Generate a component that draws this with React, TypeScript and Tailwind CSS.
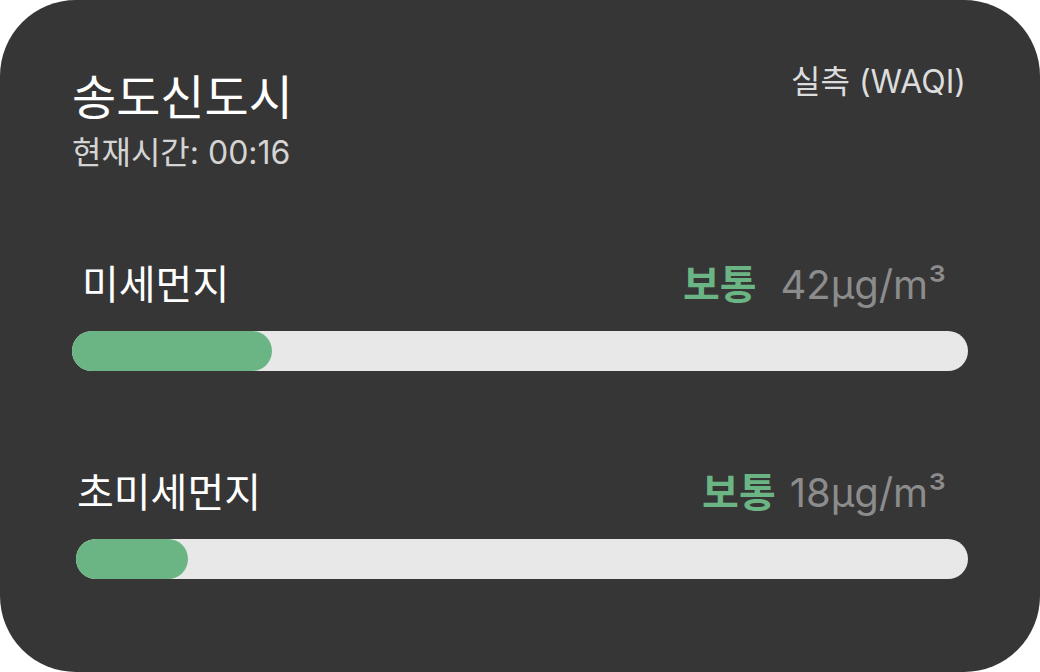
const font = { fontFamily: "Inter, 'Noto Sans CJK KR', sans-serif" };

function Row({
  label,
  level,
  value,
  pct,
  labelPad,
  barPad,
  gap,
}: {
  label: string;
  level: string;
  value: string;
  pct: number;
  labelPad: string;
  barPad: string;
  gap: string;
}) {
  return (
    <div>
      <div className={`flex items-center justify-between pr-[94px] ${labelPad}`}>
        <span className="text-[40px] leading-[48px] text-white">{label}</span>
        <div className={`flex items-center ${gap}`}>
          <span className="text-[40px] leading-[48px] font-bold text-[#6bb584]">{level}</span>
          <span className="text-[40px] leading-[48px] text-[#8c8c8c]">{value}</span>
        </div>
      </div>
      <div className={`pr-[72px] mt-[22px] ${barPad}`}>
        <div className="h-10 w-full rounded-full bg-[#e8e8e8]">
          <div className="h-10 rounded-full bg-[#6bb584]" style={{ width: pct }} />
        </div>
      </div>
    </div>
  );
}

export default function App() {
  return (
    <div className="w-[1040px] h-[672px] bg-white" style={font}>
      <div className="h-full w-full rounded-[76px] bg-[#363636] pt-[64px]">
        <div className="flex justify-between pl-[72px] pr-[74px]">
          <div className="pt-[6px]">
            <div className="text-[48px] leading-[56px] text-white">송도신도시</div>
            <div className="text-[32px] leading-[36px] text-[#d4d4d4] mt-[9px]">현재시간: 00:16</div>
          </div>
          <div className="text-[32px] leading-[36px] text-[#dcdcdc]">실측 (WAQI)</div>
        </div>
        <div className="mt-[90px]">
          <Row label="미세먼지" level="보통" value="42μg/m³" pct={200} labelPad="pl-[82px]" barPad="pl-[72px]" gap="gap-6" />
        </div>
        <div className="mt-[98px]">
          <Row label="초미세먼지" level="보통" value="18μg/m³" pct={112} labelPad="pl-[77px]" barPad="pl-[76px]" gap="gap-[14px]" />
        </div>
      </div>
    </div>
  );
}
